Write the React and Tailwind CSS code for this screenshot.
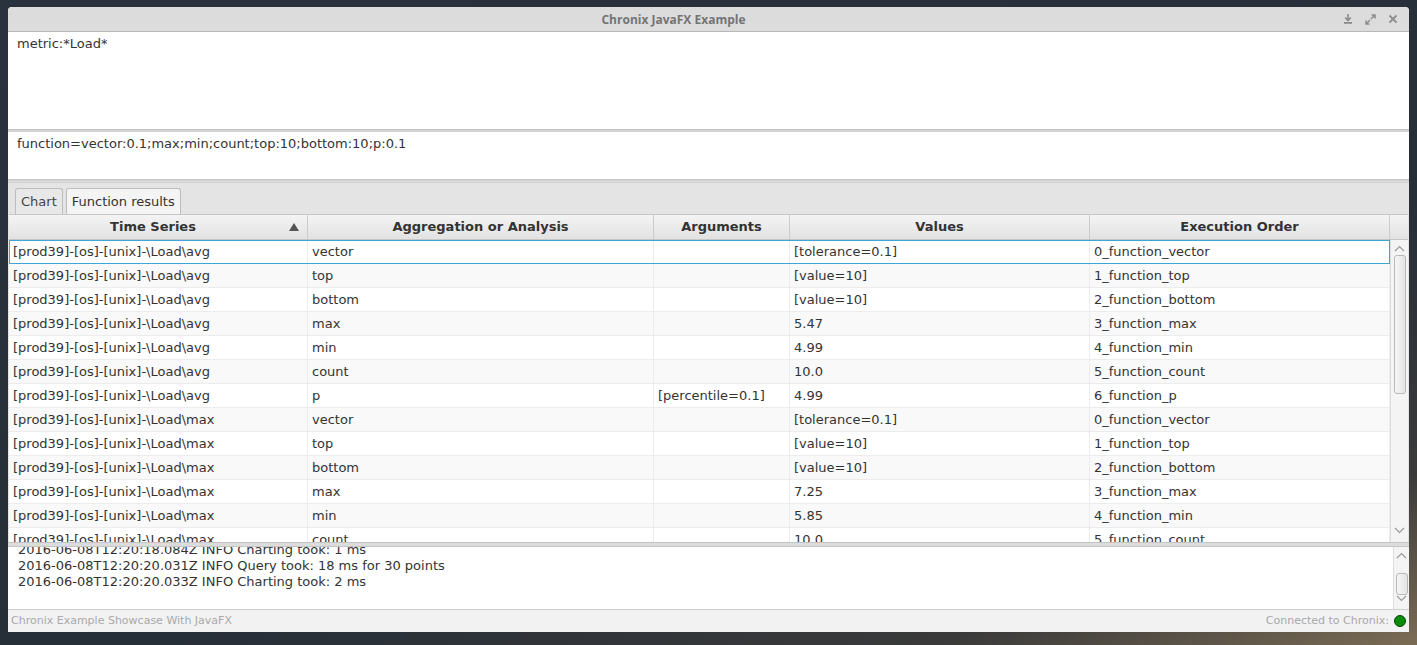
const rows = [
  ["[prod39]-[os]-[unix]-\\Load\\avg", "vector", "", "[tolerance=0.1]", "0_function_vector"],
  ["[prod39]-[os]-[unix]-\\Load\\avg", "top", "", "[value=10]", "1_function_top"],
  ["[prod39]-[os]-[unix]-\\Load\\avg", "bottom", "", "[value=10]", "2_function_bottom"],
  ["[prod39]-[os]-[unix]-\\Load\\avg", "max", "", "5.47", "3_function_max"],
  ["[prod39]-[os]-[unix]-\\Load\\avg", "min", "", "4.99", "4_function_min"],
  ["[prod39]-[os]-[unix]-\\Load\\avg", "count", "", "10.0", "5_function_count"],
  ["[prod39]-[os]-[unix]-\\Load\\avg", "p", "[percentile=0.1]", "4.99", "6_function_p"],
  ["[prod39]-[os]-[unix]-\\Load\\max", "vector", "", "[tolerance=0.1]", "0_function_vector"],
  ["[prod39]-[os]-[unix]-\\Load\\max", "top", "", "[value=10]", "1_function_top"],
  ["[prod39]-[os]-[unix]-\\Load\\max", "bottom", "", "[value=10]", "2_function_bottom"],
  ["[prod39]-[os]-[unix]-\\Load\\max", "max", "", "7.25", "3_function_max"],
  ["[prod39]-[os]-[unix]-\\Load\\max", "min", "", "5.85", "4_function_min"],
  ["[prod39]-[os]-[unix]-\\Load\\max", "count", "", "10.0", "5_function_count"],
];

const cols = ["w-[299px]", "w-[346px]", "w-[136px]", "w-[300px]", "w-[300px]"];

function Chevron({ up }) {
  return (
    <svg width="11" height="7" viewBox="0 0 11 7" className="block">
      <path
        d={up ? "M1 6 L5.5 1.5 L10 6" : "M1 1 L5.5 5.5 L10 1"}
        fill="none"
        stroke="#9a9a9a"
        strokeWidth="1.2"
      />
    </svg>
  );
}

function Row({ r, i }) {
  const selected = i === 0;
  return (
    <div
      className={`flex h-[24px] shrink-0 ${
        i % 2 === 0 ? "bg-white" : "bg-[#f9f9f9]"
      } ${selected ? "outline outline-1 -outline-offset-1 outline-[#3ba6d8]" : ""}`}
    >
      {r.map((c, j) => (
        <div
          key={j}
          className={`${cols[j]} shrink-0 h-full px-[4px] flex items-center border-r border-b border-[#ececec] whitespace-nowrap overflow-hidden`}
        >
          {c}
        </div>
      ))}
    </div>
  );
}

export default function App() {
  return (
    <div
      className="w-[1417px] h-[645px] overflow-hidden pt-[7px] pl-[8px] bg-[linear-gradient(160deg,#2a323d_0%,#262e38_60%,#3a3a3a_85%,#7b6c55_100%)]"
      style={{ fontFamily: "'DejaVu Sans', sans-serif" }}
    >
      <div className="w-[1401px] h-[625px] flex flex-col bg-white rounded-t-[4px] overflow-hidden text-[13px] text-[#333]">
        {/* title bar */}
        <div className="h-[25px] shrink-0 bg-[#dcdcdc] border-b border-[#b9b9b9] flex items-center">
          <div className="w-[140px]" />
          <div
            className="flex-1 text-center text-[12px] font-bold text-[#747474] pt-[1px] pr-[70px]"
            style={{ fontFamily: "'Open Sans', sans-serif" }}
          >
            Chronix JavaFX Example
          </div>
          <div className="w-[140px] flex items-center justify-end gap-[12px] pr-[11px]">
            <svg width="10" height="10" viewBox="0 0 10 10">
              <path d="M5 0 V6 M2.2 3.5 L5 6.5 L7.8 3.5" fill="none" stroke="#8d8d8d" strokeWidth="1.6" />
              <rect x="1" y="8" width="8" height="1.8" fill="#8d8d8d" />
            </svg>
            <svg width="11" height="11" viewBox="0 0 11 11">
              <path d="M6 5 L10 1 M6.5 1 H10 V4.5 M5 6 L1 10 M1 6.5 V10 H4.5" fill="none" stroke="#8d8d8d" strokeWidth="1.5" />
            </svg>
            <svg width="10" height="10" viewBox="0 0 10 10">
              <path d="M1.5 1.5 L8.5 8.5 M8.5 1.5 L1.5 8.5" fill="none" stroke="#8d8d8d" strokeWidth="1.8" />
            </svg>
          </div>
        </div>

        {/* query text area */}
        <div className="h-[97px] shrink-0 bg-white px-[9px] pt-[4px] leading-[16px]">
          metric:*Load*
        </div>
        <div className="h-[3px] shrink-0 bg-[#d4d4d4] border-t border-[#c4c4c4]" />

        {/* function text area */}
        <div className="h-[47px] shrink-0 bg-white px-[9px] pt-[4px] leading-[16px]">
          function=vector:0.1;max;min;count;top:10;bottom:10;p:0.1
        </div>
        <div className="h-[4px] shrink-0 bg-[#d6d6d6] border-t border-[#c6c6c6]" />

        {/* tab pane */}
        <div className="flex-1 flex flex-col bg-[#e4e4e4] min-h-0">
          <div className="h-[31px] shrink-0 flex items-end gap-[3px] pl-[7px]">
            <div className="h-[26px] px-[5px] flex items-center border border-b-0 border-[#bdbdbd] rounded-t-[3px] bg-[#e8e8e8] text-[#444]">
              Chart
            </div>
            <div className="h-[26px] px-[5px] flex items-center border border-b-0 border-[#bdbdbd] rounded-t-[3px] bg-[#f4f4f4] text-[#333]">
              Function results
            </div>
          </div>

          <div className="flex-1 flex flex-col bg-white mx-[1px] min-h-0">
            {/* header */}
            <div className="h-[26px] shrink-0 flex bg-[linear-gradient(#f4f4f4,#e2e2e2)] border-t border-b border-[#c6c6c6]">
              {["Time Series", "Aggregation or Analysis", "Arguments", "Values", "Execution Order"].map(
                (h, j) => (
                  <div
                    key={j}
                    className={`${cols[j]} shrink-0 relative flex items-center justify-center border-r border-[#cbcbcb] font-bold text-[#333] ${
                      j === 0 ? "pr-[10px]" : ""
                    }`}
                  >
                    {h}
                    {j === 0 && (
                      <span className="absolute right-[8px] top-[8px] w-0 h-0 border-l-[5px] border-r-[5px] border-b-[8px] border-l-transparent border-r-transparent border-b-[#555]" />
                    )}
                  </div>
                )
              )}
              <div className="flex-1" />
            </div>

            {/* body */}
            <div className="flex-1 flex min-h-0">
              <div className="flex flex-col overflow-hidden">
                {rows.map((r, i) => (
                  <Row key={i} r={r} i={i} />
                ))}
              </div>
              <div className="flex-1 flex flex-col items-center bg-[#f4f4f4] border-l border-[#dedede]">
                <div className="h-[15px] flex items-center pt-[2px]">
                  <Chevron up />
                </div>
                <div className="w-[12px] h-[139px] rounded-[3px] border border-[#b8b8b8] bg-[linear-gradient(90deg,#f6f6f6,#e4e4e4)]" />
                <div className="flex-1" />
                <div className="h-[15px] flex items-start">
                  <Chevron />
                </div>
              </div>
            </div>
          </div>
        </div>

        <div className="h-[5px] shrink-0 bg-[#dcdcdc] border-t border-[#c4c4c4] border-b" />

        {/* log area */}
        <div className="h-[63px] shrink-0 flex bg-white border-b border-[#cfcfcf]">
          <div className="flex-1 overflow-hidden pl-[10px] leading-[16px]">
            <div className="-mt-[5px]">
              <div>2016-06-08T12:20:18.084Z INFO Charting took: 1 ms</div>
              <div>2016-06-08T12:20:20.031Z INFO Query took: 18 ms for 30 points</div>
              <div>2016-06-08T12:20:20.033Z INFO Charting took: 2 ms</div>
            </div>
          </div>
          <div className="w-[16px] flex flex-col items-center bg-[#f4f4f4] border-l border-[#dedede]">
            <div className="h-[16px] flex items-center">
              <Chevron up />
            </div>
            <div className="mt-[10px] w-[12px] h-[22px] rounded-[3px] border border-[#b8b8b8] bg-[linear-gradient(90deg,#f6f6f6,#e4e4e4)]" />
            <div className="flex-1" />
            <div className="h-[14px] flex items-start">
              <Chevron />
            </div>
          </div>
        </div>

        {/* status bar */}
        <div className="h-[22px] shrink-0 flex items-center justify-between bg-[#f2f2f2] pl-[3px] pr-[3px] text-[11px] text-[#a9a9a9]">
          <span>Chronix Example Showcase With JavaFX</span>
          <span className="flex items-center gap-[5px]">
            Connected to Chronix:
            <span className="w-[12px] h-[12px] rounded-full bg-[#0c8a0c] border border-[#054a05]" />
          </span>
        </div>
      </div>
    </div>
  );
}
